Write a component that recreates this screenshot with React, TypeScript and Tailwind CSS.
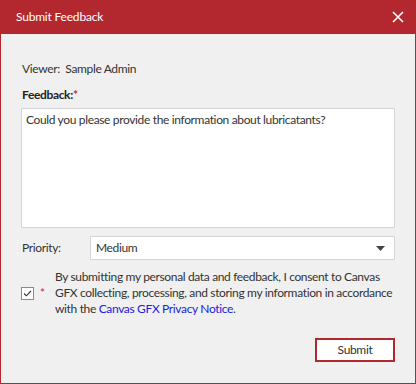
import { useState } from 'react';

export default function App() {
  const [text, setText] = useState('Could you please provide the information about lubricatants?');
  const [agree, setAgree] = useState(true);

  return (
    <div className="w-[416px] h-[384px] flex flex-col text-[12px] tracking-[-0.35px] text-[#333] font-['Segoe_UI','Lato','Open_Sans',sans-serif]">
      <div className="h-[34px] bg-[#b3282f] text-white flex items-center justify-between pl-4 pr-[11px] shrink-0">
        <span className="text-[12px] tracking-[-0.2px]">Submit Feedback</span>
        <svg width="12" height="12" viewBox="0 0 12 12" className="mr-[1px]">
          <path d="M1 1L11 11M11 1L1 11" stroke="white" strokeWidth="1.6" />
        </svg>
      </div>
      <div className="flex-1 bg-[#f0f0f0] border-x border-b border-[#b3282f] pl-5 pr-5 pt-[27px] flex flex-col">
        <div className="leading-4 pl-[1px]">Viewer:&nbsp; Sample Admin</div>
        <div className="leading-4 mt-[10px] pl-[1px] font-bold text-[#222]">
          Feedback:<span className="text-[#c0283a]">*</span>
        </div>
        <textarea
          className="mt-[5px] h-[120px] w-full resize-none bg-white border border-[#d3d5db] px-[4px] py-[3px] leading-4 outline-none text-[#333]"
          value={text}
          onChange={e => setText(e.target.value)}
        />
        <div className="mt-[8px] flex items-center">
          <span className="w-[69px] pl-[1px]">Priority:</span>
          <div className="flex-1 h-[24px] bg-white border border-[#d3d5db] flex items-center justify-between pl-[5px] pr-[9px]">
            <span>Medium</span>
            <svg width="9" height="5" viewBox="0 0 9 5"><path d="M0 0H9L4.5 5Z" fill="#444" /></svg>
          </div>
        </div>
        <div className="mt-[9px] flex items-center">
          <button
            onClick={() => setAgree(!agree)}
            className="w-[13px] h-[13px] border border-[#8a8a8a] bg-white flex items-center justify-center shrink-0"
          >
            {agree && (
              <svg width="9" height="7" viewBox="0 0 9 7"><path d="M1 3.5L3.3 5.8L8 1" stroke="#333" strokeWidth="1.1" fill="none" /></svg>
            )}
          </button>
          <span className="text-[#c0283a] ml-[6px] w-[15px]">*</span>
          <p className="leading-4 flex-1">
            By submitting my personal data and feedback, I consent to Canvas GFX collecting, processing, and storing my information in accordance with the <a className="text-[#2020e0]">Canvas GFX Privacy Notice</a>.
          </p>
        </div>
        <div className="mt-[21px] flex justify-end">
          <button className="w-[80px] h-[24px] bg-white border-2 border-[#b3282f] text-[#333]">Submit</button>
        </div>
      </div>
    </div>
  );
}
